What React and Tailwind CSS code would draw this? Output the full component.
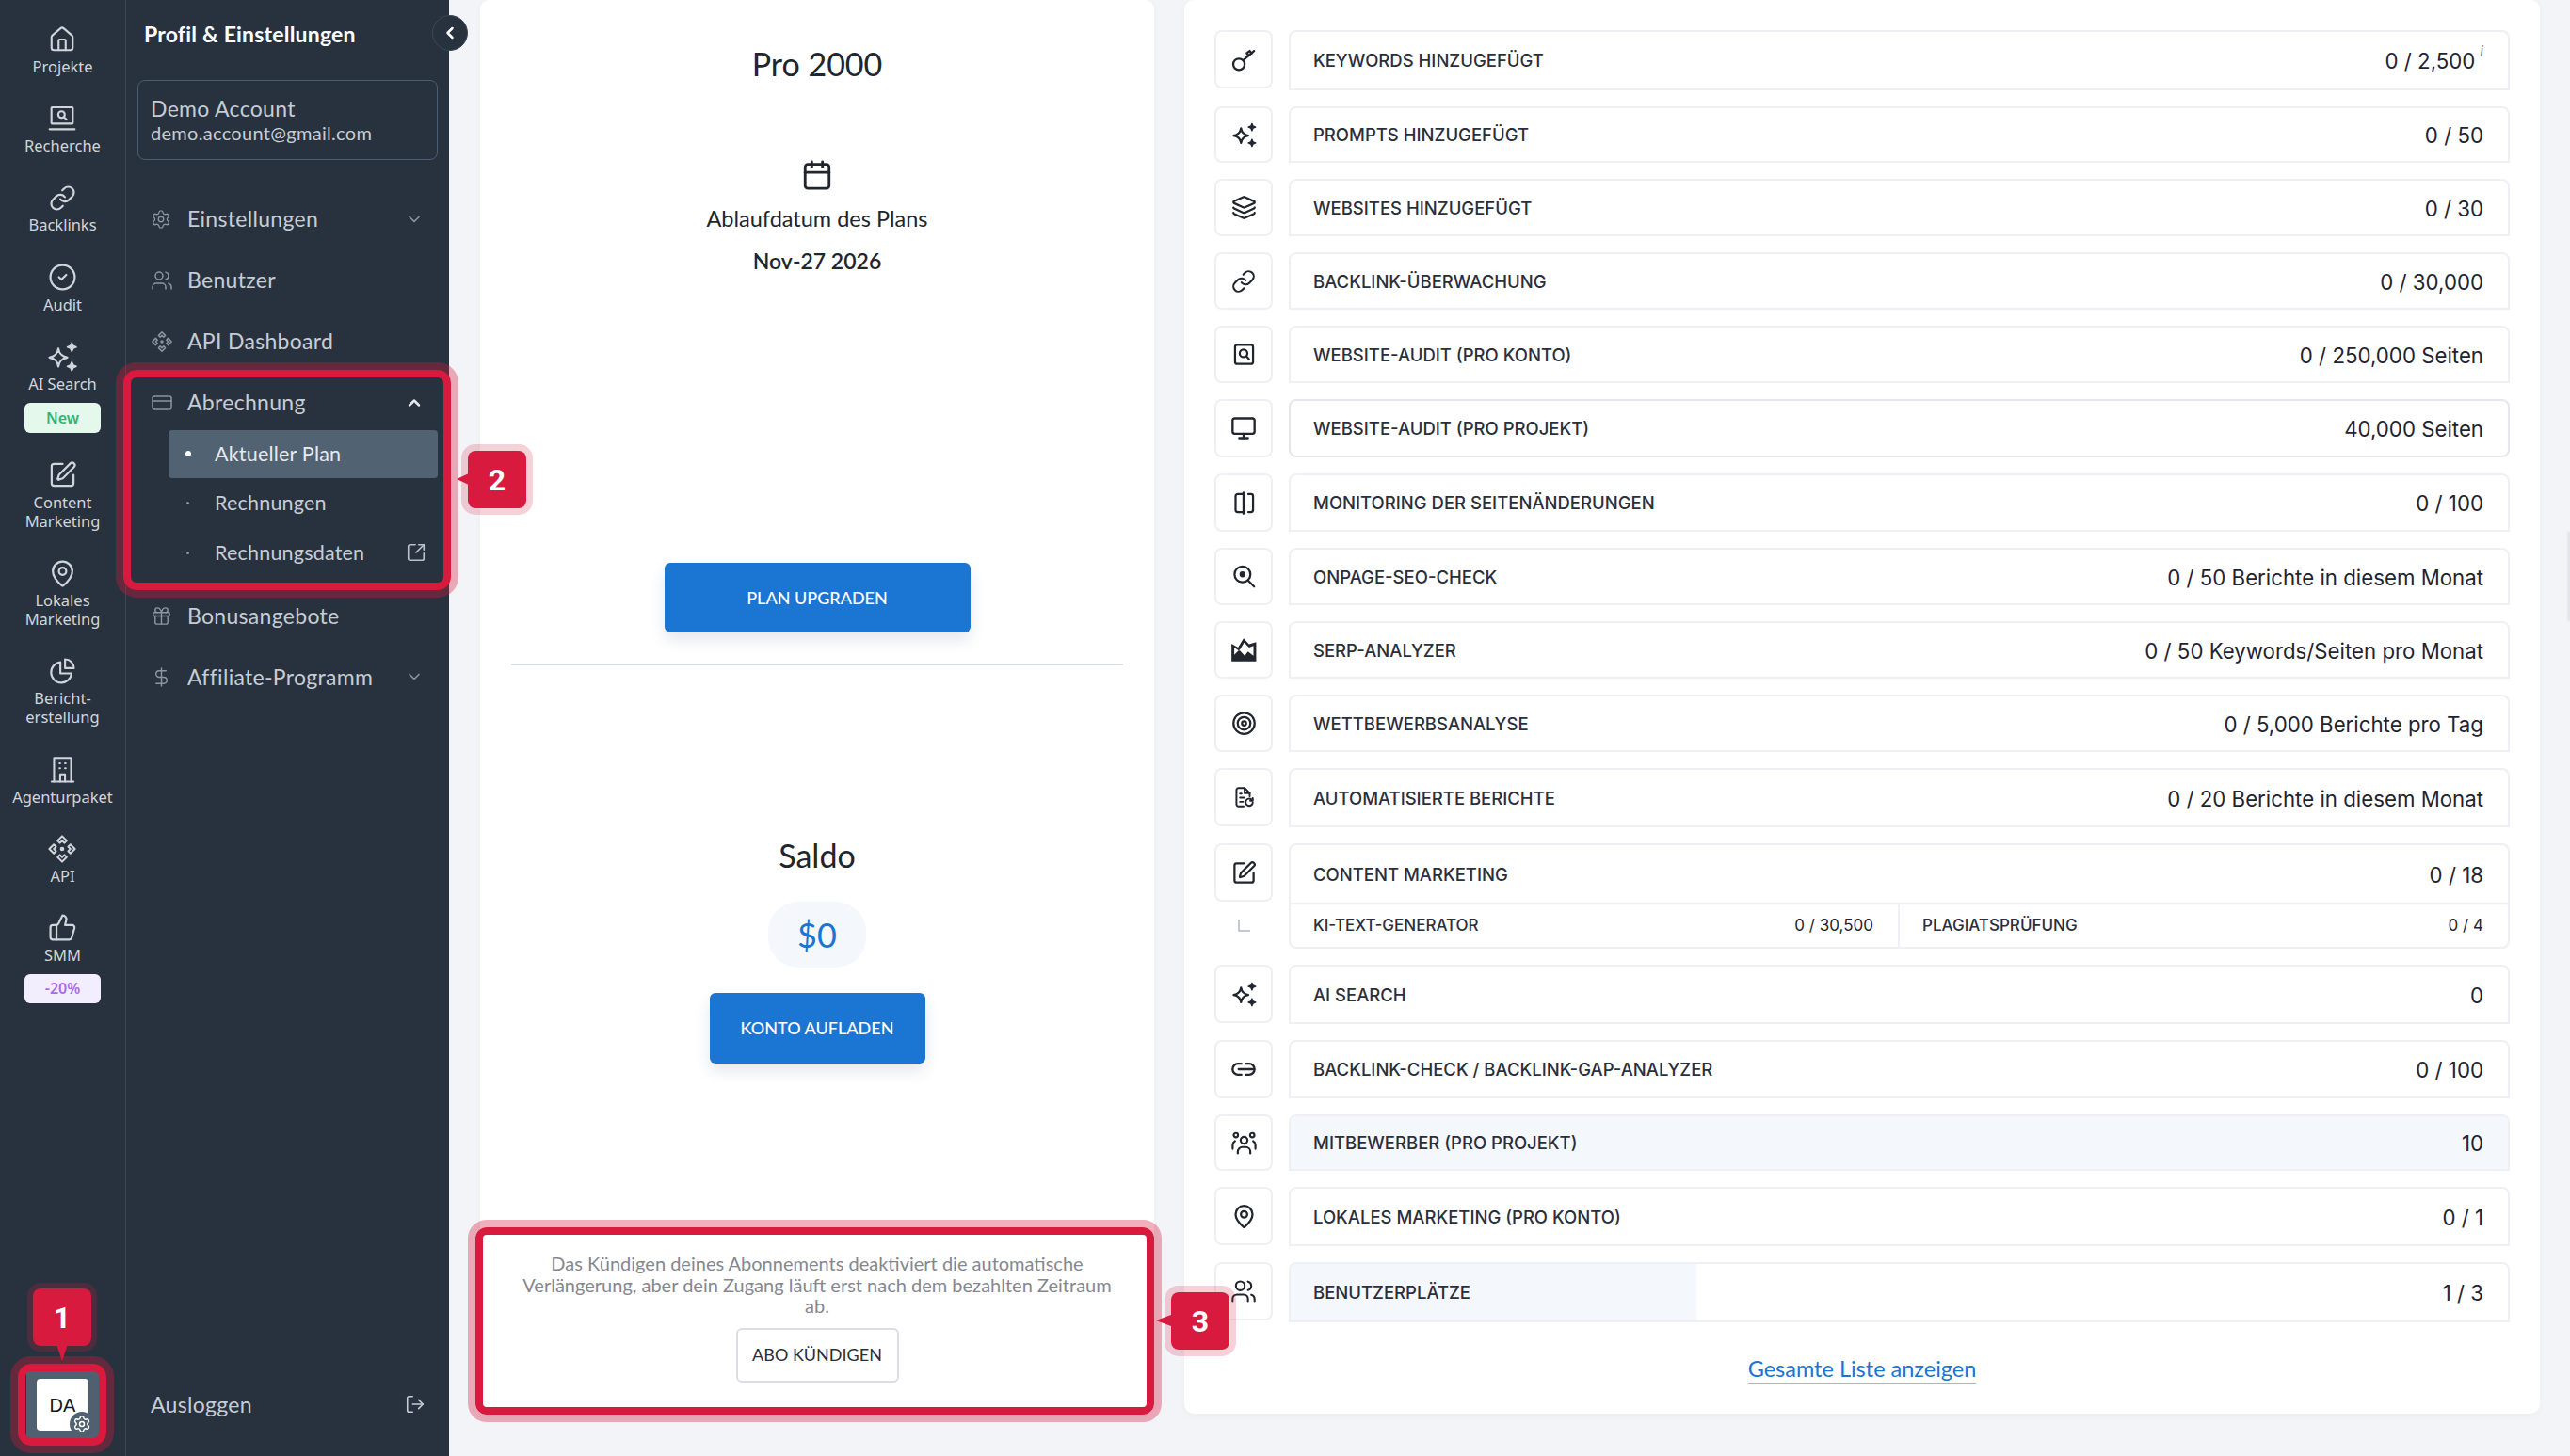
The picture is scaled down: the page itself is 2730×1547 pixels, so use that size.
import React from "react";
import { House, Link, CircleCheck, SquarePen, MapPin, Settings, ThumbsUp, Users, CreditCard, ChevronDown, ChevronUp, ChevronLeft, Gift, DollarSign, SquareArrowOutUpRight, LogOut, Calendar, Layers, Monitor, Target } from "lucide-react";

const S = ({ size = 24, sw = 2, children, className = "" }) => (
  <svg width={size} height={size} viewBox="0 0 24 24" fill="none" stroke="currentColor" strokeWidth={sw} strokeLinecap="round" strokeLinejoin="round" className={className}>{children}</svg>
);
const Sparkle = (p) => (
  <S {...p}>
    <path d="M9.500 6.500C10 10 11.500 11.700 15.500 12.500 11.500 13.300 10 15 9.500 18.500 9 15 7.500 13.300 3.500 12.500 7.500 11.700 9 10 9.500 6.500Z" />
    <path d="M18.500 2.500l.9 2.100 2.100.9-2.100.9-.9 2.100-.9-2.100-2.100-.9 2.100-.9z" fill="currentColor" strokeWidth="1" />
    <path d="M18.500 15.500l.9 2.100 2.100.9-2.100.9-.9 2.100-.9-2.100-2.100-.9 2.100-.9z" fill="currentColor" strokeWidth="1" />
  </S>
);
const Laptop = (p) => (
  <S {...p}>
    <rect x="3.500" y="3" width="17" height="13" rx="0.5" />
    <circle cx="11.500" cy="8.800" r="2.600" />
    <path d="M13.500 10.800l2 2" />
    <path d="M2 20.500h20" />
  </S>
);
const Api = (p) => {
  const c = <path d="M12 1.800l3.600 3.600-1.800 1.800L12 5.400l-1.800 1.800-1.800-1.800z" />;
  return (
    <S {...p} sw={1.5}>
      {c}
      <g transform="rotate(90 12 12)">{c}</g>
      <g transform="rotate(180 12 12)">{c}</g>
      <g transform="rotate(270 12 12)">{c}</g>
      <circle cx="12" cy="12" r="1" fill="currentColor" />
    </S>
  );
};
const Pie = (p) => (
  <S {...p}>
    <path d="M10.500 4.500A8.700 8.700 0 1 0 20 14h-9.500z" />
    <path d="M14.500 2a7.500 7.500 0 0 1 7.500 7.500h-7.500z" />
  </S>
);
const Office = (p) => (
  <S {...p}>
    <path d="M5 22V2.500h14V22" />
    <path d="M3 22h18" />
    <path d="M9.500 7h.5M14 7h.5M9.500 11h.5M14 11h.5" />
    <path d="M10 22v-6h4v6" />
  </S>
);
const Key = (p) => (
  <S {...p}>
    <circle cx="7.500" cy="16" r="5" />
    <path d="M11.200 12.600L20.800 4.200" />
    <path d="M16 8.400l-1.600-2.200 2.600-2 1.600 2.200" />
  </S>
);
const AuditBox = (p) => (
  <S {...p}>
    <rect x="3.500" y="3" width="17" height="18" rx="2" />
    <circle cx="11.500" cy="11" r="3.600" />
    <path d="M14.400 14l2.200 2.400" />
  </S>
);
const Cols = (p) => (
  <S {...p}>
    <path d="M11.500 3.500H6a2 2 0 0 0-2 2v13a2 2 0 0 0 2 2h5.500" />
    <path d="M11.500 2v20" />
    <path d="M16 3.500h2.500a2 2 0 0 1 2 2v13a2 2 0 0 1-2 2H16" />
  </S>
);
const ZoomDot = (p) => (
  <S {...p}>
    <circle cx="10.500" cy="10" r="7.500" />
    <circle cx="10.500" cy="10" r="1.800" fill="currentColor" />
    <path d="M16 16l5.500 5.500" />
  </S>
);
const Serp = ({ size }) => (
  <svg width={size} height={size} viewBox="0 0 24 24">
    <path d="M1 22V6l6 3.500L12 1l5 5.500 6.500-2V22z" fill="currentColor" />
    <path d="M3.500 9.500V16L8 11.500l5 5.500 3-4 5 4V8l-4 1.500L12.500 5 8 12.500z" fill="#fff" />
  </svg>
);
const Report = (p) => (
  <S {...p} sw={1.8}>
    <path d="M12 21H7a2 2 0 0 1-2-2V5a2 2 0 0 1 2-2h6l5 5v3" />
    <path d="M13 3v5h5" />
    <path d="M8.500 8.500h1.500M8.500 12.500h4M8.500 16.500h3" />
    <path d="M21 17a3.500 3.500 0 1 1-1.200-2.700" />
    <path d="M21 13v2.500h-2.500" />
  </S>
);
const Group = (p) => (
  <S {...p} sw={1.8}>
    <circle cx="12" cy="9.500" r="3" />
    <path d="M6.500 21v-1.500a4 4 0 0 1 4-4h3a4 4 0 0 1 4 4V21" />
    <circle cx="4.800" cy="5" r="1.900" />
    <circle cx="19.200" cy="5" r="1.900" />
    <path d="M2 17v-3.500a4 4 0 0 1 2-3.200M22 17v-3.500a4 4 0 0 0-2-3.200" />
  </S>
);
const LinkH = (p) => (
  <S {...p}>
    <path d="M10 7H7a5 5 0 0 0 0 10h3" />
    <path d="M14 7h3a5 5 0 0 1 0 10h-3" />
    <path d="M7.500 12h14" />
  </S>
);

const rail = [
  { l: ["Projekte"], i: <House size={30} strokeWidth={1.7} /> },
  { l: ["Recherche"], i: <Laptop size={32} sw={1.6} /> },
  { l: ["Backlinks"], i: <Link size={29} strokeWidth={1.8} /> },
  { l: ["Audit"], i: <CircleCheck size={31} strokeWidth={1.7} /> },
  { l: ["AI Search"], i: <Sparkle size={38} sw={1.4} />, b: ["New", "bg-[#e4f8ec] text-[#2fb573] h-[32px]"] },
  { l: ["Content", "Marketing"], i: <SquarePen size={31} strokeWidth={1.7} /> },
  { l: ["Lokales", "Marketing"], i: <MapPin size={31} strokeWidth={1.7} /> },
  { l: ["Bericht-", "erstellung"], i: <Pie size={30} sw={1.7} /> },
  { l: ["Agenturpaket"], i: <Office size={31} sw={1.6} /> },
  { l: ["API"], i: <Api size={32} /> },
  { l: ["SMM"], i: <ThumbsUp size={31} strokeWidth={1.7} />, b: ["-20%", "bg-[#f3eefd] text-[#a96be8] h-[31px]"] },
];

const rows = [
  { h: "h-[64px]", l: "KEYWORDS HINZUGEFÜGT", v: "0 / 2,500", i: <Key size={29} sw={1.9} />, info: true },
  { h: "h-[60px]", l: "PROMPTS HINZUGEFÜGT", v: "0 / 50", i: <Sparkle size={31} sw={1.8} /> },
  { h: "h-[61px]", l: "WEBSITES HINZUGEFÜGT", v: "0 / 30", i: <Layers size={27} strokeWidth={2} /> },
  { h: "h-[61px]", l: "BACKLINK-ÜBERWACHUNG", v: "0 / 30,000", i: <Link size={26} strokeWidth={2} /> },
  { h: "h-[61px]", l: "WEBSITE-AUDIT (PRO KONTO)", v: "0 / 250,000 Seiten", i: <AuditBox size={27} /> },
  { h: "h-[62px]", l: "WEBSITE-AUDIT (PRO PROJEKT)", v: "40,000 Seiten", i: <Monitor size={28} strokeWidth={2} />, strong: true },
  { h: "h-[62px]", l: "MONITORING DER SEITENÄNDERUNGEN", v: "0 / 100", i: <Cols size={27} /> },
  { h: "h-[61px]", l: "ONPAGE-SEO-CHECK", v: "0 / 50 Berichte in diesem Monat", i: <ZoomDot size={27} /> },
  { h: "h-[61px]", l: "SERP-ANALYZER", v: "0 / 50 Keywords/Seiten pro Monat", i: <Serp size={28} /> },
  { h: "h-[61px]", l: "WETTBEWERBSANALYSE", v: "0 / 5,000 Berichte pro Tag", i: <Target size={27} strokeWidth={2} /> },
  { h: "h-[63px]", l: "AUTOMATISIERTE BERICHTE", v: "0 / 20 Berichte in diesem Monat", i: <Report size={26} /> },
  { h: "h-[112px]", l: "CONTENT MARKETING", v: "0 / 18", i: <SquarePen size={27} strokeWidth={2} />, sub: true },
  { h: "h-[63px]", l: "AI SEARCH", v: "0", i: <Sparkle size={31} sw={1.8} /> },
  { h: "h-[62px]", l: "BACKLINK-CHECK / BACKLINK-GAP-ANALYZER", v: "0 / 100", i: <LinkH size={28} /> },
  { h: "h-[60px]", l: "MITBEWERBER (PRO PROJEKT)", v: "10", i: <Group size={29} />, fill: "w-full" },
  { h: "h-[63px]", l: "LOKALES MARKETING (PRO KONTO)", v: "0 / 1", i: <MapPin size={27} strokeWidth={2} /> },
  { h: "h-[64px]", l: "BENUTZERPLÄTZE", v: "1 / 3", i: <Users size={28} strokeWidth={1.8} />, fill: "w-1/3" },
];

const Item = ({ icon, label, chev }) => (
  <div className="flex items-center h-[65px] pl-[26px] pr-[27px] text-[23px] text-[#c6ccd4] tracking-[0.3px]">
    <span className="w-[39px] flex text-[#8a95a1]">{icon}</span>
    <span className="flex-1">{label}</span>
    {chev && <ChevronDown size={20} className="text-[#8a95a1]" />}
  </div>
);

const Badge = ({ n, className }) => (
  <div className={`absolute w-[62px] h-[61px] rounded-[8px] bg-[#d71a3d] flex items-center justify-center text-white text-[32px] font-bold font-['Roboto'] ${className}`}>{n}</div>
);

export default function App() {
  return (
    <div className="relative flex w-[2730px] h-[1547px] overflow-hidden bg-[#f2f4f8] font-['Lato',sans-serif]">
      {/* rail */}
      <aside className="w-[134px] shrink-0 bg-[#28323f] border-r border-[#3d4855] flex flex-col items-center pt-[27px] pb-[19px] font-['Noto_Sans',sans-serif] text-[#d0d5db]">
        <div className="flex flex-col items-center gap-[30.2px]">
          {rail.map((r) => (
            <div key={r.l[0]} className="flex flex-col items-center">
              <div className="h-[30px] flex items-center justify-center">{r.i}</div>
              <div className="mt-[4px] text-center text-[16.500px] leading-[20px] whitespace-nowrap">
                {r.l.map((x) => <div key={x}>{x}</div>)}
              </div>
              {r.b && <div className={`mt-[10px] w-[81px] rounded-[6px] flex items-center justify-center text-[16px] font-semibold ${r.b[1]}`}>{r.b[0]}</div>}
            </div>
          ))}
        </div>
        <div className="mt-auto w-[78px] h-[71px] bg-[#4f6070] flex items-center justify-center">
          <div className="relative w-[55px] h-[55px] bg-white rounded-[4px] flex items-center justify-center text-[#14181f] text-[20px] font-['Liberation_Sans']">
            DA
            <span className="absolute -right-[6px] -bottom-[6px] w-[26px] h-[26px] rounded-full bg-[#4f6070] flex items-center justify-center text-white"><Settings size={20} strokeWidth={1.8} /></span>
          </div>
        </div>
      </aside>

      {/* nav */}
      <nav className="w-[343px] shrink-0 bg-[#28323f] flex flex-col">
        <div className="pl-[19px] pt-[21px] h-[85px] text-[23px] leading-[30px] font-bold text-white tracking-[0.2px]">Profil &amp; Einstellungen</div>
        <div className="ml-[12px] w-[319px] h-[85px] rounded-[8px] border border-[#4c5d74] pl-[13px] pt-[14px] text-[#c6ccd4]">
          <div className="text-[23px] leading-[30px] tracking-[0.3px]">Demo Account</div>
          <div className="text-[20px] leading-[22px] tracking-[0.3px]">demo.account@gmail.com</div>
        </div>
        <div className="mt-[30px]">
          <Item icon={<Settings size={22} strokeWidth={1.5} />} label="Einstellungen" chev />
          <Item icon={<Users size={24} strokeWidth={1.5} />} label="Benutzer" />
          <Item icon={<Api size={24} />} label="API Dashboard" />
          <div className="flex items-center h-[65px] pl-[26px] pr-[27px] text-[23px] text-[#c6ccd4] tracking-[0.3px]">
            <span className="w-[39px] flex text-[#8a95a1]"><CreditCard size={24} strokeWidth={1.5} /></span>
            <span className="flex-1">Abrechnung</span>
            <ChevronUp size={20} className="text-[#e5e8ec]" strokeWidth={3} />
          </div>
          <div className="-mt-[3.5px] ml-[45px] w-[286px] flex flex-col gap-[1.5px] text-[21.500px] text-[#c6ccd4] tracking-[0.2px]">
            <div className="h-[51px] rounded-[4px] bg-[#516272] flex items-center pl-[49px] relative text-[#e6e9ed]">
              <span className="absolute left-[18px] w-[6px] h-[6px] rounded-full bg-white" />Aktueller Plan
            </div>
            <div className="h-[51px] flex items-center pl-[49px] relative">
              <span className="absolute left-[19px] w-[3px] h-[3px] rounded-full bg-[#8a95a1]" />Rechnungen
            </div>
            <div className="h-[51px] flex items-center pl-[49px] relative">
              <span className="absolute left-[19px] w-[3px] h-[3px] rounded-full bg-[#8a95a1]" />Rechnungsdaten
              <SquareArrowOutUpRight size={22} strokeWidth={1.8} className="absolute right-[12px] text-[#b9c0c8]" />
            </div>
          </div>
          <div className="mt-[9px]">
            <Item icon={<Gift size={23} strokeWidth={1.5} />} label="Bonusangebote" />
            <Item icon={<DollarSign size={23} strokeWidth={1.5} />} label="Affiliate-Programm" chev />
          </div>
        </div>
        <div className="mt-auto mb-[35px] h-[40px] flex items-center pl-[26px] pr-[25px] text-[23px] text-[#c6ccd4] tracking-[0.3px]">
          <span className="flex-1">Ausloggen</span>
          <LogOut size={22} strokeWidth={1.7} />
        </div>
      </nav>

      {/* main */}
      <main className="flex gap-[32px] pl-[33px] pb-[45px]">
        <section className="w-[716px] rounded-[10px] bg-white flex flex-col items-center pt-[45px] text-[#20252e] shadow-[0_2px_8px_rgba(30,40,60,0.03)]">
          <div className="text-[34px] leading-[46px]">Pro 2000</div>
          <Calendar size={34} strokeWidth={2} className="mt-[78px]" />
          <div className="mt-[14px] text-[23.500px] leading-[30px]">Ablaufdatum des Plans</div>
          <div className="mt-[15px] text-[23px] leading-[30px] font-semibold">Nov-27 2026</div>
          <button className="mt-[306px] w-[325px] h-[74px] rounded-[6px] bg-[#1b75d3] text-white text-[18px] font-medium shadow-[0_8px_16px_rgba(27,60,110,0.12)]">PLAN UPGRADEN</button>
          <div className="mt-[33px] w-[650px] h-[2px] bg-[#d9dce4]" />
          <div className="mt-[179px] text-[34px] leading-[46px]">Saldo</div>
          <div className="mt-[26px] w-[104px] h-[70px] rounded-[32px] bg-[#f4f7fc] flex items-center justify-center text-[36px] text-[#1b75d3]">$0</div>
          <button className="mt-[27px] w-[229px] h-[75px] rounded-[6px] bg-[#1b75d3] text-white text-[18px] font-medium shadow-[0_8px_16px_rgba(27,60,110,0.12)]">KONTO AUFLADEN</button>
          <div className="mt-[201px] w-[640px] text-center text-[20px] leading-[22.500px] text-[#85878f]">Das Kündigen deines Abonnements deaktiviert die automatische Verlängerung, aber dein Zugang läuft erst nach dem bezahlten Zeitraum ab.</div>
          <button className="mt-[12px] w-[173px] h-[58px] rounded-[6px] border-2 border-[#dcdce6] bg-white text-[18px] text-[#2a2f3b]">ABO KÜNDIGEN</button>
        </section>

        <section className="w-[1440px] rounded-[10px] bg-white pt-[32px] pl-[32px] pr-[32px] shadow-[0_2px_8px_rgba(30,40,60,0.03)]">
          <div className="flex flex-col gap-[17px] font-['Inter',sans-serif]">
            {rows.map((r) => (
              <div key={r.l} className={`flex gap-[17px] ${r.h}`}>
                <div className="flex flex-col w-[62px] shrink-0">
                  <div className="h-[62px] rounded-[8px] border-2 border-[#eff0f6] flex items-center justify-center text-[#20252e]">{r.i}</div>
                  {r.sub && (
                    <div className="flex-1 flex items-center justify-center text-[#b4b8c2]">
                      <svg width="13" height="13" viewBox="0 0 13 13" fill="none" stroke="currentColor" strokeWidth="1.500"><path d="M1 0v12h12" /></svg>
                    </div>
                  )}
                </div>
                <div className={`relative flex-1 flex flex-col overflow-hidden border-2 ${r.strong ? "border-[#e6e7ee] rounded-[8px]" : r.sub ? "border-[#eff0f6] rounded-[8px]" : "border-[#eff0f6] rounded-t-[8px]"}`}>
                  {r.fill && <div className={`absolute inset-y-0 left-0 ${r.fill} bg-[#f4f7fc]`} />}
                  <div className="relative flex-1 flex items-center justify-between pl-[24px] pr-[26px] pt-[2px]">
                    <span className="text-[18.500px] font-medium text-[#2a2f3b]">{r.l}</span>
                    <span className="flex text-[22.250px] text-[#1f2430]">
                      {r.v}
                      {r.info && <i className="ml-[5px] -mt-[3px] text-[15px] leading-[20px] text-[#6f8ba0]">i</i>}
                    </span>
                  </div>
                  {r.sub && (
                    <div className="relative h-[47px] border-t-2 border-[#eff0f6] flex items-center">
                      <div className="w-[647px] h-full flex items-center justify-between pl-[24px] pr-[26px] border-r-2 border-[#eff0f6]">
                        <span className="text-[17px] font-medium text-[#2a2f3b]">KI-TEXT-GENERATOR</span>
                        <span className="text-[17px] text-[#1f2430]">0 / 30,500</span>
                      </div>
                      <div className="flex-1 h-full flex items-center justify-between pl-[24px] pr-[26px]">
                        <span className="text-[17px] font-medium text-[#2a2f3b]">PLAGIATSPRÜFUNG</span>
                        <span className="text-[17px] text-[#1f2430]">0 / 4</span>
                      </div>
                    </div>
                  )}
                </div>
              </div>
            ))}
          </div>
          <div className="mt-[34px] flex justify-center">
            <a className="text-[23.500px] leading-[30px] text-[#1b75d3] border-b border-[#8fbbe9]">Gesamte Liste anzeigen</a>
          </div>
        </section>
      </main>

      {/* toggle */}
      <div className="absolute left-[459px] top-[16px] w-[38px] h-[38px] rounded-full bg-[#28323f] border border-[#3d4855] flex items-center justify-center text-white">
        <ChevronLeft size={20} strokeWidth={3} />
      </div>

      {/* page-edge handle */}
      <div className="absolute right-0 top-[565px] w-[2px] h-[95px] bg-[#d9dbe1] blur-[1px]" />

      {/* annotations */}
      <div className="absolute left-[19px] top-[1449px] w-[94px] h-[87px] rounded-[14px] border-[8px] border-[#d71a3d] outline-[8px] outline-[rgba(215,26,61,0.35)]" />
      <div className="absolute left-[131px] top-[393px] w-[348px] h-[234px] rounded-[14px] border-[8px] border-[#d71a3d] outline-[8px] outline-[rgba(215,26,61,0.35)]" />
      <div className="absolute left-[505px] top-[1304px] w-[721px] h-[199px] rounded-[12px] border-[8px] border-[#d71a3d] outline-[8px] outline-[rgba(215,26,61,0.35)]" />

      <Badge n="1" className="left-[35px] top-[1369px] outline-[6px] outline-[rgba(215,26,61,0.2)]" />
      <div className="absolute left-[60px] top-[1428px] w-0 h-0 border-x-[6px] border-x-transparent border-t-[18px] border-t-[#d71a3d]" />
      <Badge n="2" className="left-[497px] top-[479px] outline-[7px] outline-[rgba(215,26,61,0.2)]" />
      <div className="absolute left-[485px] top-[503px] w-0 h-0 border-y-[6px] border-y-transparent border-r-[13px] border-r-[#d71a3d]" />
      <Badge n="3" className="left-[1244px] top-[1373px] outline-[7px] outline-[rgba(215,26,61,0.2)]" />
      <div className="absolute left-[1228px] top-[1397px] w-0 h-0 border-y-[6px] border-y-transparent border-r-[16px] border-r-[#d71a3d]" />
    </div>
  );
}
